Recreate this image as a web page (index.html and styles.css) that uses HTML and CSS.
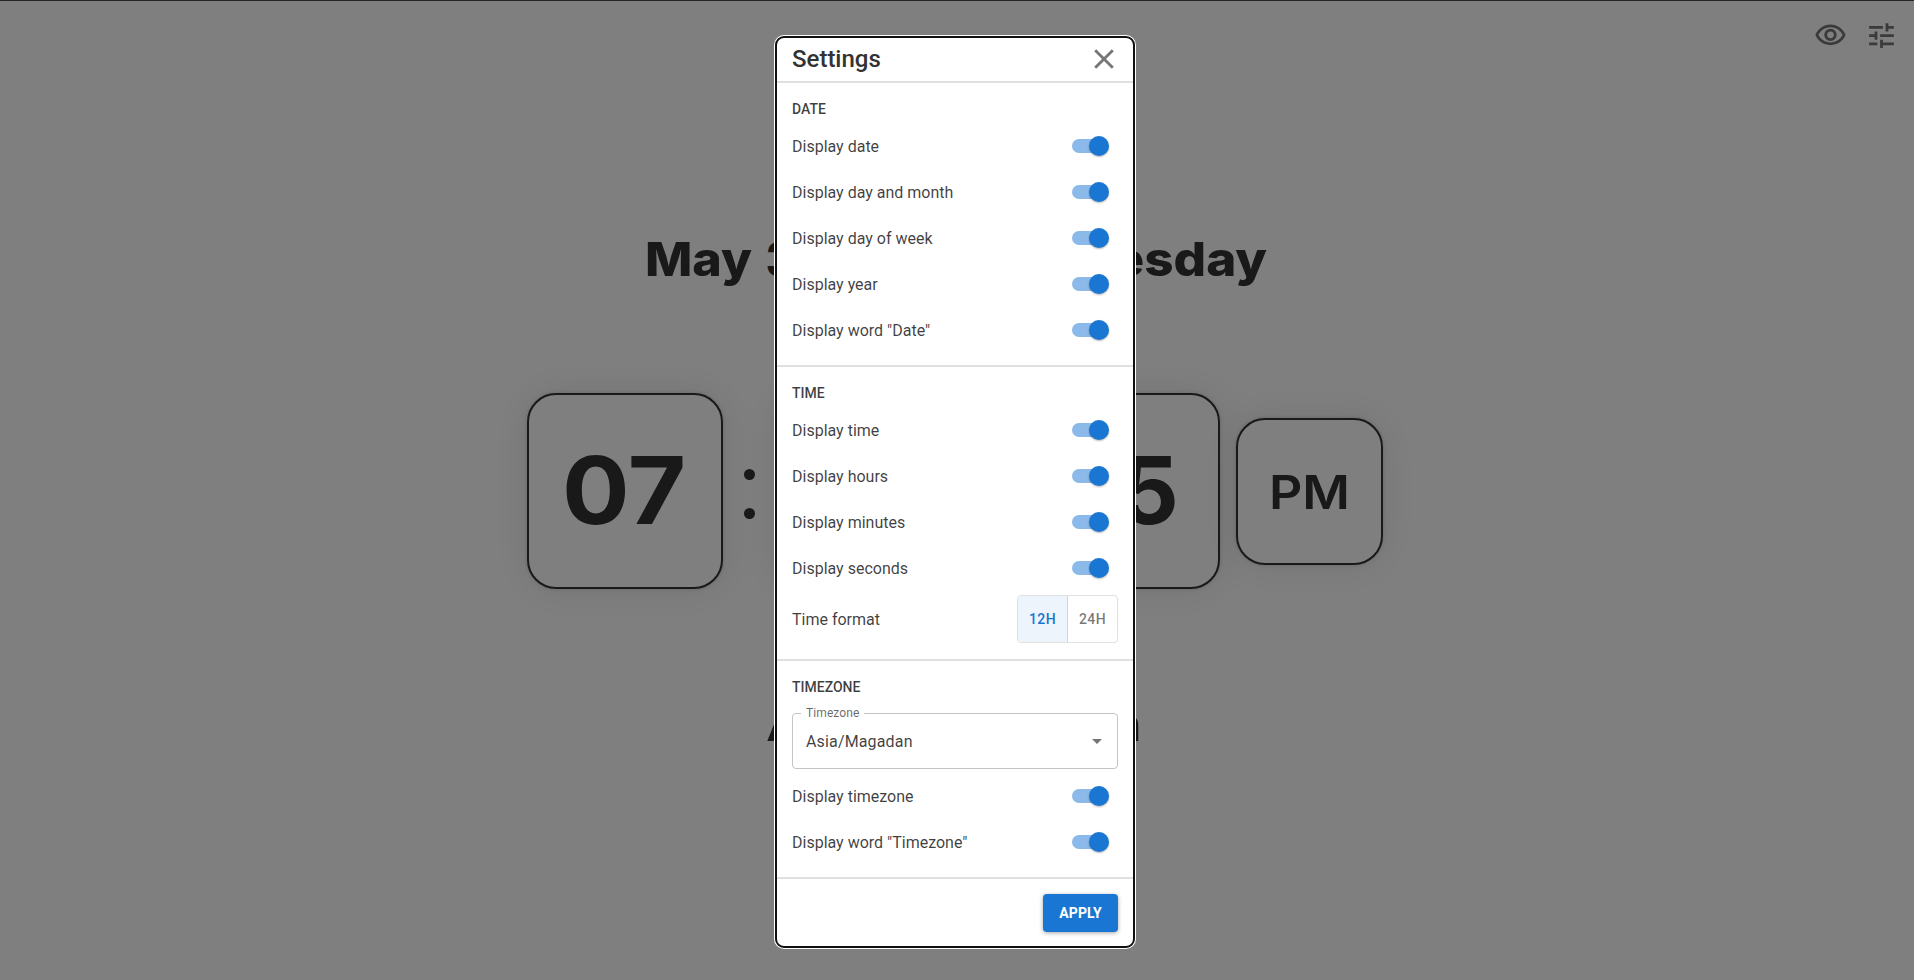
FILE: index.html
```html
<!DOCTYPE html>
<html lang="en">
<head>
<meta charset="utf-8">
<title>Clock settings</title>
<link rel="stylesheet" href="styles.css">
</head>
<body>
<main class="page">
  <div class="tools">
    <svg class="tool" viewBox="0 0 24 24"><path d="M12 6c3.79 0 7.17 2.13 8.82 5.5C19.17 14.870 15.790 17 12 17s-7.170-2.130-8.820-5.500C4.830 8.130 8.210 6 12 6m0-2C7 4 2.730 7.110 1 11.500 2.730 15.890 7 19 12 19s9.270-3.110 11-7.500C21.270 7.110 17 4 12 4zm0 5c1.380 0 2.500 1.120 2.500 2.500S13.380 14 12 14s-2.500-1.120-2.500-2.500S10.620 9 12 9m0-2c-2.480 0-4.500 2.020-4.500 4.500S9.520 16 12 16s4.500-2.020 4.500-4.500S14.480 7 12 7z"/></svg>
    <svg class="tool" viewBox="0 0 24 24"><path d="M3 17v2h6v-2H3zM3 5v2h10V5H3zm10 16v-2h8v-2h-8v-2h-2v6h2zM7 9v2H3v2h4v2h2V9H7zm14 4v-2H11v2h10zm-6-4h2V7h4V5h-4V3h-2v6z"/></svg>
  </div>
  <svg class="line date" viewBox="0 0 640 60">
    <text x="8" y="46" textLength="107" lengthAdjust="spacingAndGlyphs">May</text>
    <text x="129" y="46" textLength="60" lengthAdjust="spacingAndGlyphs">30,</text>
    <text x="208" y="46" textLength="130" lengthAdjust="spacingAndGlyphs">2023,</text>
    <text x="413" y="46" textLength="217" lengthAdjust="spacingAndGlyphs">Tuesday</text>
  </svg>
  <div class="clock">
    <div class="card"><svg class="digits" viewBox="0 0 150 140"><text x="12" y="103" textLength="124" lengthAdjust="spacingAndGlyphs">07</text></svg></div>
    <div class="colon"><i></i><i></i></div>
    <div class="card"><svg class="digits" viewBox="0 0 150 140"><text x="12" y="103" textLength="124" lengthAdjust="spacingAndGlyphs">21</text></svg></div>
    <div class="colon"><i></i><i></i></div>
    <div class="card"><svg class="digits" viewBox="0 0 150 140"><text x="12" y="103" textLength="120" lengthAdjust="spacingAndGlyphs">25</text></svg></div>
    <div class="card period"><svg class="pm" viewBox="0 0 90 60"><text x="4" y="48" textLength="81" lengthAdjust="spacingAndGlyphs">PM</text></svg></div>
  </div>
  <svg class="line zone" viewBox="0 0 400 60"><text x="11" y="46" textLength="376" lengthAdjust="spacingAndGlyphs">Asia/Magadan</text></svg>
</main>
<div class="overlay">
  <section class="dialog">
    <header class="head"><h1>Settings</h1>
      <svg class="close" viewBox="0 0 20 20"><path d="M1.200 1.200 18.800 18.800M18.800 1.200 1.200 18.800"/></svg>
    </header>
    <div class="group">
      <h2>DATE</h2>
      <div class="row">Display date<span class="switch"></span></div>
      <div class="row">Display day and month<span class="switch"></span></div>
      <div class="row">Display day of week<span class="switch"></span></div>
      <div class="row">Display year<span class="switch"></span></div>
      <div class="row">Display word "Date"<span class="switch"></span></div>
    </div>
    <div class="group">
      <h2>TIME</h2>
      <div class="row">Display time<span class="switch"></span></div>
      <div class="row">Display hours<span class="switch"></span></div>
      <div class="row">Display minutes<span class="switch"></span></div>
      <div class="row">Display seconds<span class="switch"></span></div>
      <div class="row format">Time format<div class="toggle"><span class="on">12H</span><span>24H</span></div></div>
    </div>
    <div class="group">
      <h2>TIMEZONE</h2>
      <fieldset class="select"><legend>Timezone</legend><span>Asia/Magadan</span><i class="arrow"></i></fieldset>
      <div class="row">Display timezone<span class="switch"></span></div>
      <div class="row">Display word "Timezone"<span class="switch"></span></div>
    </div>
    <footer class="foot"><button class="apply">APPLY</button></footer>
  </section>
</div>
</body>
</html>
```
FILE: styles.css
```css
* { box-sizing: border-box; }
body { margin: 0; height: 980px; overflow: hidden; font-family: Roboto, sans-serif; background: #fff; }
.page { height: 980px; display: flex; flex-direction: column; align-items: center; padding-right: 4px; border-top: 1px solid #464b52; color: #333; }
.tools { align-self: flex-end; display: flex; gap: 18px; padding: 18px 12px 0 0; height: 229px; }
.tool { width: 33px; height: 33px; fill: #757575; }
svg { overflow: visible; }
svg text { font-family: Inter, sans-serif; fill: #333; }
.line { height: 60px; flex: none; }
.date { width: 640px; margin-left: 3px; font-size: 47px; font-weight: 800; }
.clock { display: flex; align-items: center; margin-top: 103px; height: 196px; }
.card { width: 196px; height: 196px; border: 2px solid #333; border-radius: 29px; background: #fff; display: flex; align-items: center; justify-content: center; box-shadow: 0 0 4px rgba(0,0,0,.16), 0 0 42px rgba(0,0,0,.09); }
.digits { width: 150px; height: 140px; font-size: 94px; font-weight: 700; }
.colon { width: 52.500px; display: flex; flex-direction: column; align-items: center; gap: 28px; padding-top: 6px; }
.colon i { width: 11px; height: 11px; border-radius: 50%; background: #333; }
.period { width: 147px; height: 147px; margin-left: 16px; }
.pm { width: 90px; height: 60px; font-size: 47px; font-weight: 600; }
.zone { width: 400px; margin-top: 106px; font-size: 47px; font-weight: 600; }
.overlay { position: absolute; inset: 0; background: rgba(0,0,0,.5); display: flex; justify-content: center; align-items: flex-start; padding: 36px 4px 0 0; }
.dialog { width: 360px; height: 912px; border: 2px solid #101010; border-radius: 9px; background: #fff; box-shadow: 0 0 0 1px #fff; color: rgba(0,0,0,.76); }
.head { height: 45px; border-bottom: 2px solid #e0e0e0; display: flex; align-items: center; justify-content: space-between; padding: 0 19px 2px 15px; }
.head h1 { margin: 0; font-size: 24px; line-height: 28px; font-weight: 500; color: #333; }
.close { width: 20px; height: 20px; stroke: #757575; stroke-width: 2.800; fill: none; }
.group { padding: 14px 15px 12px; border-bottom: 2px solid #e0e0e0; }
.group h2 { margin: 0; height: 26px; font-size: 14px; line-height: 24px; font-weight: 500; }
.row { height: 46px; display: flex; align-items: center; justify-content: space-between; font-size: 16px; }
.switch { width: 34px; height: 14px; margin-right: 12px; border-radius: 7px; background: #8bb9e9; position: relative; }
.switch::after { content: ""; position: absolute; right: -3px; top: -3px; width: 20px; height: 20px; border-radius: 50%; background: #1976d2; box-shadow: 0 1px 2px rgba(0,0,0,.3); }
.format { height: 56px; }
.toggle { display: flex; width: 101px; height: 48px; border: 1px solid #e0e0e0; border-radius: 4px; font-size: 14px; font-weight: 500; letter-spacing: .4px; color: rgba(0,0,0,.54); overflow: hidden; }
.toggle span { flex: 1; display: flex; align-items: center; justify-content: center; }
.toggle .on { background: #edf4fc; color: #1976d2; border-right: 1px solid #cfd5dc; }
.select { margin: 6px 0 4px; padding: 0 15px 4px 13px; height: 62px; border: 1px solid #c4c4c4; border-radius: 4px; display: flex; align-items: center; justify-content: space-between; font-size: 16px; letter-spacing: .15px; }
.select legend { font-size: 12px; line-height: 12px; padding: 0 5px; margin-left: -5px; color: rgba(0,0,0,.6); letter-spacing: .1px; }
.arrow { border: 5px solid transparent; border-top-color: #757575; border-bottom: 0; }
.foot { display: flex; justify-content: flex-end; padding: 15px 15px 0; }
.apply { width: 75px; height: 38px; border: 0; border-radius: 4px; background: #1976d2; color: #fff; font: 700 14px Roboto, sans-serif; letter-spacing: .1px; padding: 0; box-shadow: 0 1px 4px rgba(0,0,0,.35); }
```
